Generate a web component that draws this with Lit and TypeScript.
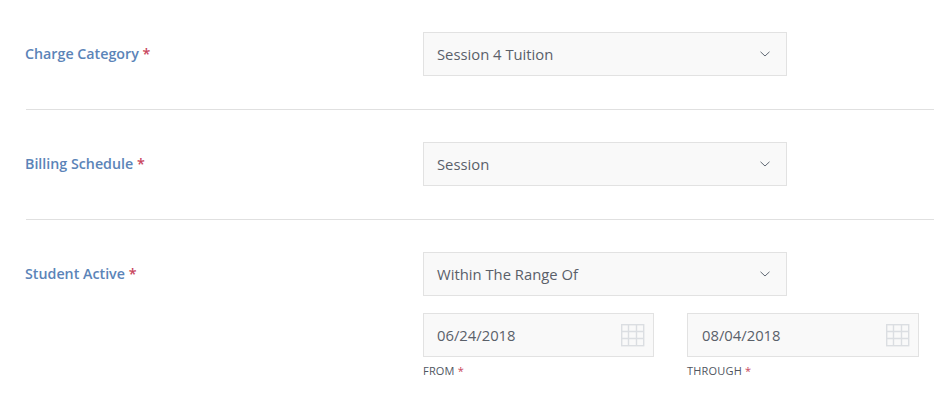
import { LitElement, html, css } from "lit";
import { customElement } from "lit/decorators.js";

const chevron = html`<svg class="chev" width="10" height="6" viewBox="0 0 10 6"><path d="M0.5 0.8 L5 5 L9.5 0.8" fill="none" stroke="#5f6873" stroke-width="1"/></svg>`;
const cal = html`<svg class="cal" width="24" height="23" viewBox="0 0 24 23"><g fill="none" stroke="#dbdee2" stroke-width="1.4"><rect x="0.7" y="0.7" width="22" height="21"/><path d="M7.5 0.5V21.5M15.5 0.5V21.5M0.5 7.5H22.5M0.5 14.5H22.5"/></g></svg>`;

@customElement("app-root")
export class AppRoot extends LitElement {
  static styles = css`
    :host { display: block; width: 934px; height: 400px; background: #fff; font-family: "Open Sans", sans-serif; overflow: hidden; }
    .row { display: flex; margin-left: 26px; border-bottom: 1px solid #e0e0e0; height: 110px; box-sizing: border-box; padding-top: 32px; }
    .row.last { border-bottom: 0; height: 180px; }
    .label { width: 398px; margin-left: -1px; flex: none; font-size: 14.25px; font-weight: 600; color: #5b84b8; line-height: 20px; padding-top: 12px; box-sizing: border-box; }
    .req { color: #c8455c; }
    .select, .date { box-sizing: border-box; height: 44px; flex: none; border: 1px solid #e2e2e2; background: #f9f9f9; display: flex; align-items: center; justify-content: space-between; padding: 0 16px 0 13px; font-size: 14.8px; color: #5a6069; }
    .select { width: 364px; }
    .date { width: 231px; padding-right: 8px; }
    .date.b { width: 232px; padding-left: 14px; }
    .controls { display: flex; flex-direction: column; gap: 17px; }
    .dates { display: flex; gap: 33px; }
    .sub { font-size: 11px; font-weight: 500; letter-spacing: .2px; color: #50565f; margin-top: 7px; line-height: 14px; }
  `;
  render() {
    return html`
      <div class="row">
        <div class="label">Charge Category <span class="req">*</span></div>
        <div class="select">Session 4 Tuition ${chevron}</div>
      </div>
      <div class="row">
        <div class="label">Billing Schedule <span class="req">*</span></div>
        <div class="select">Session ${chevron}</div>
      </div>
      <div class="row last">
        <div class="label">Student Active <span class="req">*</span></div>
        <div class="controls">
          <div class="select">Within The Range Of ${chevron}</div>
          <div class="dates">
            <div>
              <div class="date">06/24/2018 ${cal}</div>
              <div class="sub">FROM <span class="req">*</span></div>
            </div>
            <div>
              <div class="date b">08/04/2018 ${cal}</div>
              <div class="sub">THROUGH <span class="req">*</span></div>
            </div>
          </div>
        </div>
      </div>
    `;
  }
}
